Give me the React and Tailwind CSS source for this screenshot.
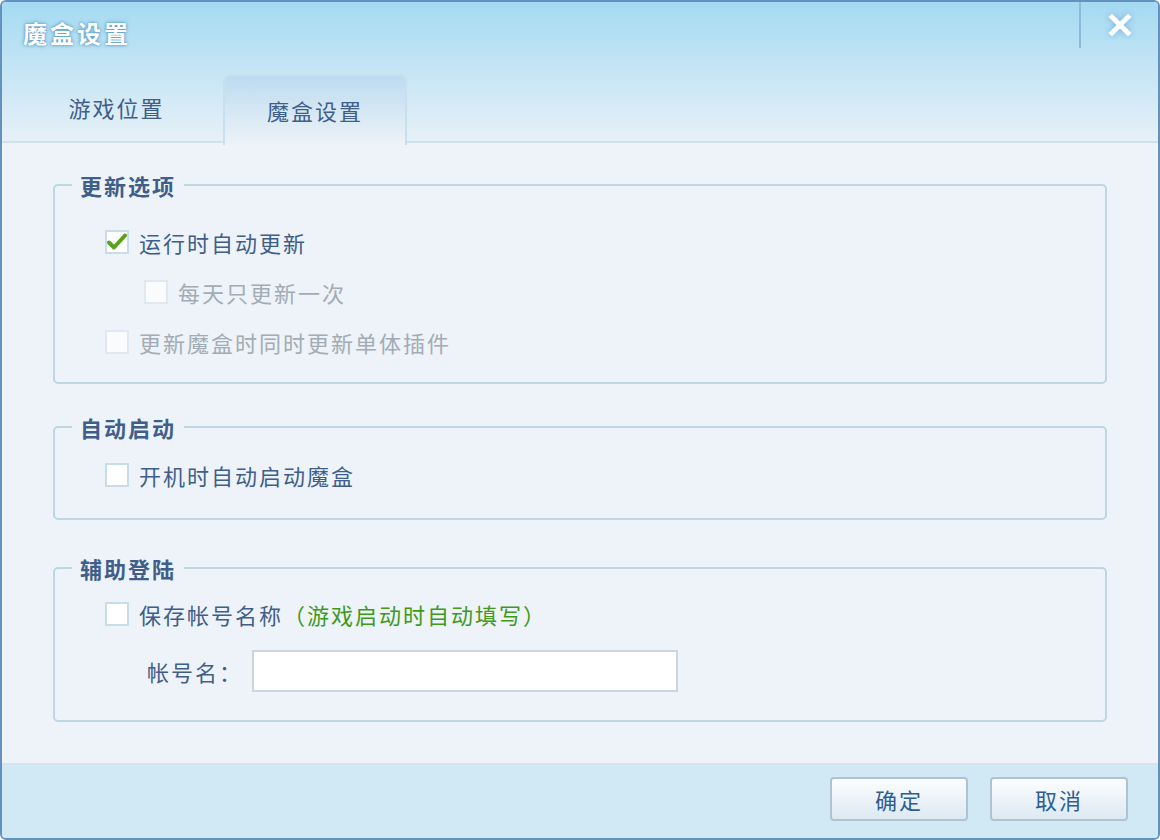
import { useState } from 'react';

function Check({ checked, disabled, onChange }) {
  return (
    <span
      onClick={disabled ? undefined : onChange}
      className={`flex h-[24px] w-[24px] shrink-0 items-center justify-center border-2 ${
        disabled ? 'border-[#e0e9f0] bg-[#f9fbfd]' : 'border-[#c9dcea] bg-white'
      }`}
    >
      {checked && (
        <svg width="20" height="18" viewBox="0 0 20 18">
          <path d="M2 9.5 L7 14.5 L18 2.5" fill="none" stroke="#5aa21e" strokeWidth="4" strokeLinecap="round" strokeLinejoin="round" />
        </svg>
      )}
    </span>
  );
}

function Row({ checked, disabled, label, extra, indent, onChange }) {
  return (
    <div className={`flex h-[50px] items-center gap-[10px] ${indent ? 'pl-[89px]' : 'pl-[50px]'}`}>
      <Check checked={checked} disabled={disabled} onChange={onChange} />
      <span className={disabled ? 'text-[#a3acb5]' : 'text-[#3f5f8a]'}>
        {label}
        {extra && <span className="text-[#3f9a1c]">{extra}</span>}
      </span>
    </div>
  );
}

function Group({ title, className, children }) {
  return (
    <fieldset className={`rounded-[5px] border-2 border-[#bcd6e4] p-0 ${className}`}>
      <legend className="ml-[17px] px-[8px] text-[22px] font-bold leading-[30px] tracking-[2px] text-[#3f5f8a]">{title}</legend>
      {children}
    </fieldset>
  );
}

export default function App() {
  const [opts, setOpts] = useState({ auto: true, daily: false, plugins: false, boot: false, save: false });
  const toggle = (k) => setOpts({ ...opts, [k]: !opts[k] });

  return (
    <div
      className="flex h-[840px] w-[1160px] flex-col overflow-hidden rounded-[6px] border-2 border-[#6492bf] text-[22px] tracking-[2px]"
      style={{ fontFamily: '"Noto Sans CJK SC", "Noto Sans", sans-serif' }}
    >
      {/* header + tabs */}
      <div className="relative h-[141px] shrink-0 border-b-2 border-[#cfe1ec] bg-gradient-to-b from-[#a4daf2] to-[#e6f0f7]">
        <div className="flex h-[62px] items-center pl-[21px]">
          <span className="text-[24px] font-bold tracking-[3px] text-white [text-shadow:0_0_4px_#5b9cc4,0_0_2px_#5b9cc4]">魔盒设置</span>
        </div>
        <div className="absolute right-0 top-0 flex h-[46px] w-[79px] items-center justify-center border-l-2 border-[#8fb9d8]">
          <svg width="24" height="22" viewBox="0 0 24 22" className="drop-shadow-[0_0_3px_#6fb0dc]">
            <path d="M4 3 L20 19 M20 3 L4 19" stroke="white" strokeWidth="5" strokeLinecap="square" />
          </svg>
        </div>
        <div className="flex h-[79px] items-end pl-[8px]">
          <div className="flex h-[69px] w-[213px] items-center justify-center pb-[2px] text-[#3f5f8a]">游戏位置</div>
          <div className="-mb-[2px] flex h-[71px] w-[184px] items-center justify-center rounded-t-[8px] border-2 border-b-0 border-[#c8dfee] bg-gradient-to-b from-[#bcdbf0] to-[#edf3f8] text-[#3f5f8a]">
            魔盒设置
          </div>
        </div>
      </div>

      {/* body */}
      <div className="flex-1 bg-[#edf3f8] px-[51px] pt-[27px]">
        <Group title="更新选项" className="pb-[15px]">
          <div className="pt-[17px]">
            <Row checked={opts.auto} label="运行时自动更新" onChange={() => toggle('auto')} />
            <Row disabled indent label="每天只更新一次" />
            <Row disabled label="更新魔盒时同时更新单体插件" />
          </div>
        </Group>

        <Group title="自动启动" className="mt-[28px] pb-[18px]">
          <div className="pt-[8px]">
            <Row checked={opts.boot} label="开机时自动启动魔盒" onChange={() => toggle('boot')} />
          </div>
        </Group>

        <Group title="辅助登陆" className="mt-[33px] pb-[28px]">
          <div className="pt-[6px]">
            <Row checked={opts.save} label="保存帐号名称" extra="（游戏启动时自动填写）" onChange={() => toggle('save')} />
            <div className="mt-[11px] flex items-center pl-[92px]">
              <span className="w-[105px] text-[#3f5f8a]">帐号名：</span>
              <input className="h-[42px] w-[426px] border-2 border-[#cad7e1] bg-white px-2 text-[20px] text-[#3f5f8a] outline-none" />
            </div>
          </div>
        </Group>
      </div>

      {/* footer */}
      <div className="flex h-[75px] shrink-0 items-start justify-end gap-[22px] border-t-2 border-[#d4e5f0] bg-[#d1e8f5] pr-[30px] pt-[12px]">
        <button className="h-[44px] w-[138px] rounded-[4px] border-2 border-[#b0c2d0] bg-gradient-to-b from-[#fbfdfe] to-[#dde9f2] text-[#2f5d93]">确定</button>
        <button className="h-[44px] w-[138px] rounded-[4px] border-2 border-[#b0c2d0] bg-gradient-to-b from-[#fbfdfe] to-[#dde9f2] text-[#2f5d93]">取消</button>
      </div>
    </div>
  );
}
